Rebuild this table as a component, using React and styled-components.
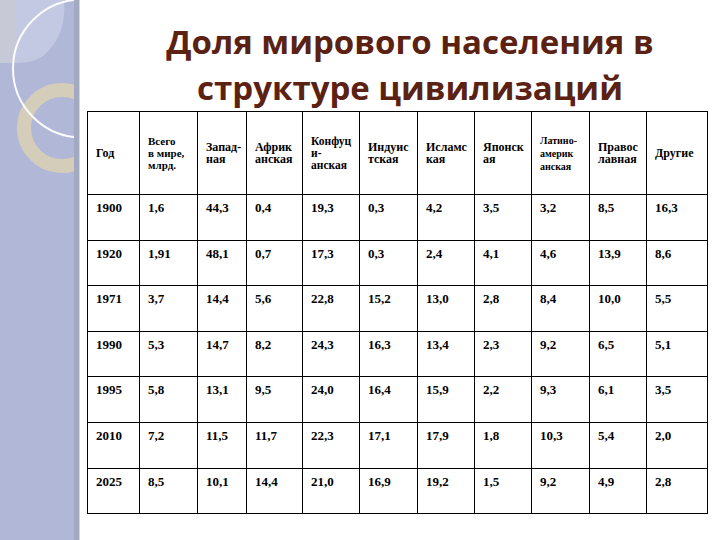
import React from 'react';
import styled, { createGlobalStyle } from 'styled-components';

const GlobalStyle = createGlobalStyle`
  html, body { margin: 0; padding: 0; background: #fff; }
  #root { width: 720px; height: 540px; }
`;

const Page = styled.div`
  display: flex;
  width: 720px;
  height: 540px;
  overflow: hidden;
  background: #fff;
`;

const Sidebar = styled.aside`
  flex: 0 0 74px;
  width: 74px;
  height: 100%;
  background: #b1b7d6;
  border-right: 5px solid #a3a9be;
  box-shadow: 1px 0 0 #d4d6de;
`;

const Deco = styled.svg`
  display: block;
  width: 74px;
  height: 190px;
`;

const Main = styled.main`
  flex: 1;
  display: flex;
  flex-direction: column;
  padding-left: 1px;
`;

const Title = styled.h1`
  margin: 0;
  height: 111px;
  box-sizing: border-box;
  padding: 19px 0 0 20px;
  font-family: "Open Sans", "Noto Sans", sans-serif;
  font-weight: 700;
  font-size: 33px;
  line-height: 46px;
  color: #5b2113;
  text-align: center;
  white-space: nowrap;
`;

const Table = styled.table`
  margin-left: 7px;
  width: 620px;
  border-collapse: collapse;
  table-layout: fixed;
  color: #000;
`;

const HeadRow = styled.tr`
  height: 83px;
`;

const Row = styled.tr`
  height: 45.6px;
`;

const HeadCell = styled.th`
  border: 1px solid #000;
  vertical-align: middle;
  text-align: left;
  font-family: "Liberation Serif", "DejaVu Serif", "Times New Roman", serif;
  font-size: ${(p) => p.$size || 12}px;
  line-height: ${(p) => p.$lh || 12.5}px;
  font-weight: 700;
  padding: 0 2px 0 8px;
  white-space: nowrap;
  overflow: hidden;
`;

const Cell = styled.td`
  border: 1px solid #000;
  vertical-align: top;
  text-align: left;
  font-family: "Liberation Serif", "DejaVu Serif", "Times New Roman", serif;
  font-weight: 700;
  font-size: 13px;
  line-height: 14px;
  padding: 6px 2px 0 8px;
`;

const widths = [52, 58, 49, 56, 57, 58, 57, 57, 58, 57, 61];

const headers = [
  { lines: ['Год'] },
  { lines: ['Всего', 'в  мире,', 'млрд.'], size: 11, lh: 12 },
  { lines: ['Запад-', 'ная'] },
  { lines: ['Африк', 'анская'] },
  { lines: ['Конфуц', 'и-', 'анская'], size: 11.5, lh: 12 },
  { lines: ['Индуис', 'тская'] },
  { lines: ['Исламс', 'кая'] },
  { lines: ['Японск', 'ая'] },
  { lines: ['Латино-', 'америк', 'анская'], size: 10, lh: 13 },
  { lines: ['Правос', 'лавная'] },
  { lines: ['Другие'] },
];

const rows = [
  ['1900', '1,6', '44,3', '0,4', '19,3', '0,3', '4,2', '3,5', '3,2', '8,5', '16,3'],
  ['1920', '1,91', '48,1', '0,7', '17,3', '0,3', '2,4', '4,1', '4,6', '13,9', '8,6'],
  ['1971', '3,7', '14,4', '5,6', '22,8', '15,2', '13,0', '2,8', '8,4', '10,0', '5,5'],
  ['1990', '5,3', '14,7', '8,2', '24,3', '16,3', '13,4', '2,3', '9,2', '6,5', '5,1'],
  ['1995', '5,8', '13,1', '9,5', '24,0', '16,4', '15,9', '2,2', '9,3', '6,1', '3,5'],
  ['2010', '7,2', '11,5', '11,7', '22,3', '17,1', '17,9', '1,8', '10,3', '5,4', '2,0'],
  ['2025', '8,5', '10,1', '14,4', '21,0', '16,9', '19,2', '1,5', '9,2', '4,9', '2,8'],
];

export default function App() {
  return (
    <>
      <GlobalStyle />
      <Page>
        <Sidebar>
          <Deco viewBox="0 0 74 190">
            <rect x="0" y="0" width="16" height="63" fill="#c7c9d7" />
            <path d="M16 0 L64 0 C66 20 60 45 40 58 C32 62 24 63 16 63 Z" fill="#c4c9e3" />
            <circle cx="62" cy="128" r="38" fill="none" stroke="#d7cfb7" strokeWidth="14" opacity="0.9" />
            <circle cx="82" cy="68.5" r="69" fill="none" stroke="#ffffff" strokeWidth="2" opacity="0.95" />
          </Deco>
        </Sidebar>
        <Main>
          <Title>
            Доля мирового населения в
            <br />
            структуре цивилизаций
          </Title>
          <Table>
            <colgroup>
              {widths.map((w, i) => (
                <col key={i} style={{ width: w }} />
              ))}
            </colgroup>
            <thead>
              <HeadRow>
                {headers.map((h, i) => (
                  <HeadCell key={i} $size={h.size} $lh={h.lh}>
                    {h.lines.map((l, j) => (
                      <React.Fragment key={j}>
                        {j > 0 && <br />}
                        {l}
                      </React.Fragment>
                    ))}
                  </HeadCell>
                ))}
              </HeadRow>
            </thead>
            <tbody>
              {rows.map((r, i) => (
                <Row key={i}>
                  {r.map((v, j) => (
                    <Cell key={j}>{v}</Cell>
                  ))}
                </Row>
              ))}
            </tbody>
          </Table>
        </Main>
      </Page>
    </>
  );
}
